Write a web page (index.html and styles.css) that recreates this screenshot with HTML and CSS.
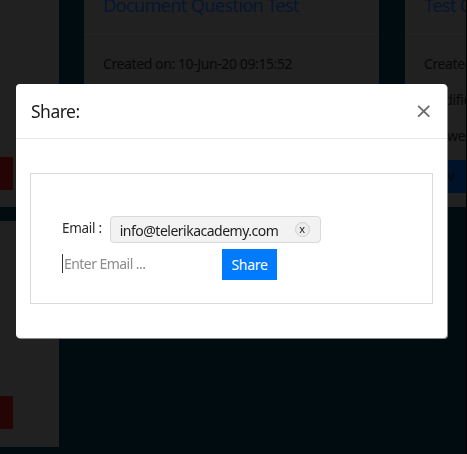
FILE: index.html
```html
<!DOCTYPE html>
<html lang="en">
<head>
<meta charset="utf-8">
<title>Share</title>
<link rel="stylesheet" href="styles.css">
</head>
<body>
<div class="page">
  <div class="col col-left">
    <div class="card card-left card-left-top"><span class="btn-red"></span></div>
    <div class="card card-left card-left-bottom"><span class="btn-red"></span></div>
  </div>
  <div class="col col-mid">
    <div class="card card-main">
      <div class="card-head"><h3 class="card-title">Document Question Test</h3></div>
      <div class="card-body">
        <p class="meta">Created on: 10-Jun-20 09:15:52</p>
        <p class="meta">Modified on: 10-Jun-20 09:15:52</p>
        <p class="meta">Answers: 1</p>
        <span class="btn-view">View</span>
      </div>
    </div>
  </div>
  <div class="col col-right">
    <div class="card card-main">
      <div class="card-head"><h3 class="card-title">Test Questionnaire</h3></div>
      <div class="card-body">
        <p class="meta">Created on: 10-Jun-20 09:15:52</p>
        <p class="meta">Modified on: 10-Jun-20 09:15:52</p>
        <p class="meta">Answers: 0</p>
        <span class="btn-view">View</span>
      </div>
    </div>
  </div>
  <div class="edge"></div>
</div>

<div class="modal">
  <div class="modal-header">
    <h4 class="modal-title">Share:</h4>
    <span class="modal-close">×</span>
  </div>
  <div class="modal-body">
    <div class="share-box">
      <div class="email-row">
        <span class="email-label">Email :</span>
        <span class="chip">
          <span class="chip-text">info@telerikacademy.com</span>
          <span class="chip-x">x</span>
        </span>
      </div>
      <div class="input-row">
        <div class="input-wrap"><input class="email-input" type="text" placeholder="Enter Email ..."></div>
        <button class="btn-share" type="button">Share</button>
      </div>
    </div>
  </div>
</div>
</body>
</html>
```

FILE: styles.css
```css
* { box-sizing: border-box; }

html, body {
  margin: 0;
  padding: 0;
  height: 100%;
  overflow: hidden;
}

body {
  background: #010c11;
  font-family: "Noto Sans", "Open Sans", sans-serif;
}

.page {
  display: flex;
  gap: 25px;
  height: 454px;
  width: 467px;
  overflow: hidden;
}

.col { display: flex; flex-direction: column; flex-shrink: 0; }

.col-left { width: 59px; gap: 14px; }
.col-mid { width: 295px; }
.col-right { flex: 1 1 0; min-width: 0; margin-left: 1px; }
.edge { width: 1px; flex-shrink: 0; background: #000; margin-left: -25px; }

.card { background: #212121; }

.card-left { display: flex; flex-direction: column; justify-content: flex-end; }
.card-left-top { height: 207px; padding-bottom: 17px; }
.card-left-bottom { height: 226px; padding-bottom: 18px; }

.btn-red {
  display: block;
  width: 13px;
  height: 33px;
  background: #250406;
}

.card-main { height: 207px; overflow: hidden; }

.card-head {
  height: 35px;
  border-bottom: 1px solid #262626;
  padding: 0 19px;
  overflow: hidden;
}

.card-title {
  margin: -8px 0 0;
  font-size: 18px;
  letter-spacing: -0.6px;
  font-weight: 400;
  line-height: 26px;
  color: #061630;
  white-space: nowrap;
}

.card-body { padding: 17px 18px 0 19px; }

.meta {
  margin: 0 0 13px;
  font-size: 14px;
  letter-spacing: -0.4px;
  line-height: 23px;
  color: #080808;
  white-space: nowrap;
}

.btn-view {
  display: inline-block;
  margin-left: -14px;
  height: 33px;
  line-height: 33px;
  padding: 0 14px;
  background: #00122a;
  color: #080808;
  font-size: 14px;
}

/* Modal */
.modal {
  position: fixed;
  left: 16px;
  top: 84px;
  width: 431px;
  height: 254px;
  background: #fff;
  border-radius: 4px;
  box-shadow: 1px 1px 0 #8a8a8a;
  display: flex;
  flex-direction: column;
}

.modal-header {
  height: 55px;
  border-bottom: 1px solid #e6e9ec;
  display: flex;
  align-items: center;
  justify-content: space-between;
  padding: 0 14px 0 15px;
}

.modal-title {
  margin: 0;
  font-size: 17.5px;
  letter-spacing: -0.5px;
  font-weight: 400;
  color: #1a1a1a;
  line-height: 1;
  padding-top: 2px;
}

.modal-close {
  font-size: 22px;
  line-height: 1;
  color: #6b6b6b;
  font-family: "DejaVu Sans", sans-serif;
  padding-bottom: 1px;
}

.modal-body {
  padding: 34px 14px 34px;
  flex: 1;
  display: flex;
}

.share-box {
  flex: 1;
  border: 1px solid #dadada;
  padding: 42px 30px 0 31px;
  display: flex;
  flex-direction: column;
  gap: 6px;
}

.email-row {
  display: flex;
  align-items: center;
  gap: 8px;
}

.email-label {
  font-size: 13.5px;
  letter-spacing: -0.3px;
  color: #2a2a2a;
  padding-bottom: 4px;
}

.chip {
  display: flex;
  align-items: center;
  justify-content: space-between;
  width: 211px;
  height: 27px;
  padding: 0 10px 0 9px;
  background: #f2f2f2;
  border: 1px solid #d9d9d9;
  border-radius: 4px;
}

.chip-text {
  font-size: 14px;
  letter-spacing: -0.5px;
  color: #1e1e1e;
  padding-top: 1px;
}

.chip-x {
  width: 15px;
  height: 15px;
  border-radius: 50%;
  border: 1px solid #cfcfcf;
  background: #ececec;
  font-size: 11px;
  line-height: 12px;
  text-align: center;
  color: #222;
}

.input-row {
  display: flex;
  align-items: flex-start;
}

.input-wrap {
  width: 160px;
  padding-top: 3px;
}

.email-input {
  border: none;
  border-left: 1px solid #333;
  outline: none;
  width: 150px;
  height: 19px;
  padding: 0 0 0 1px;
  font-family: "Noto Sans", "Open Sans", sans-serif;
  font-size: 14px;
  letter-spacing: -0.55px;
  color: #333;
  background: transparent;
}

.email-input::placeholder { color: #8c8c8c; }

.btn-share {
  height: 31px;
  width: 55px;
  border: none;
  background: #007bff;
  color: #fff;
  font-family: "Noto Sans", "Open Sans", sans-serif;
  font-size: 14px;
  letter-spacing: -0.3px;
  padding: 0;
}
```
